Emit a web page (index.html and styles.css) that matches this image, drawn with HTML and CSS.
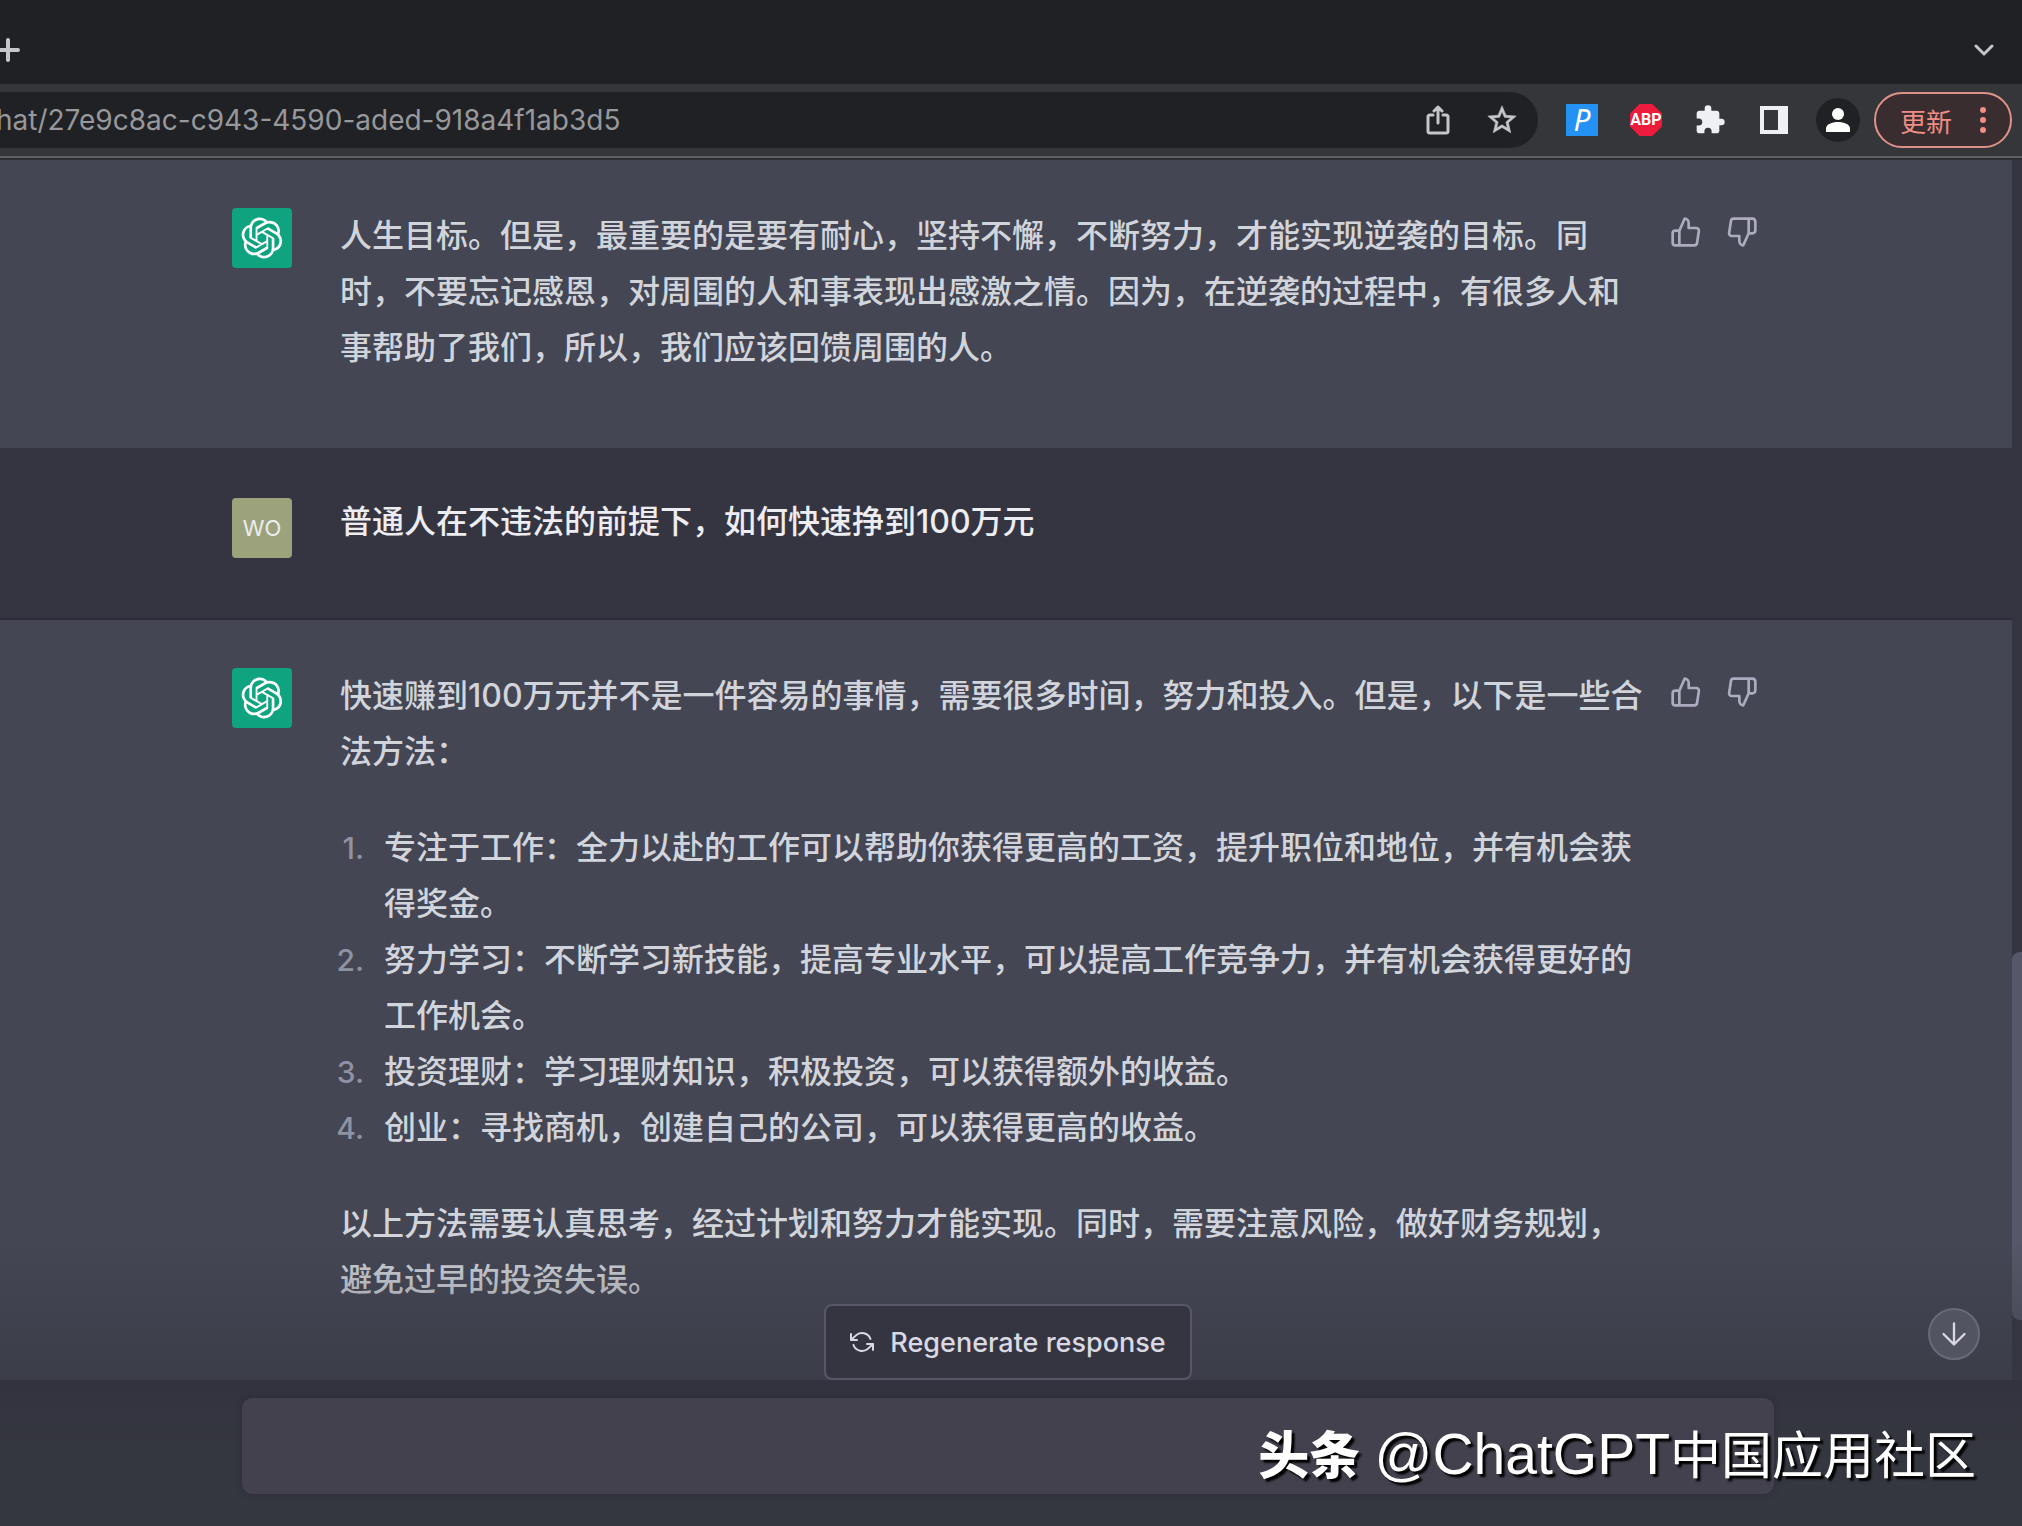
FILE: index.html
```html
<!DOCTYPE html>
<html lang="zh-CN">
<head>
    <meta charset="UTF-8">
    <meta name="viewport" content="width=device-width, initial-scale=1.0">
    <title>ChatGPT</title>
    <link rel="stylesheet" href="styles.css">
</head>
<body>
    <svg class="sprite" aria-hidden="true">
        <symbol id="logo" viewBox="0 0 41 41">
            <path fill="currentColor" d="M37.5324 16.8707C37.9808 15.5241 38.1363 14.0974 37.9886 12.6859C37.8409 11.2744 37.3934 9.91076 36.676 8.68622C35.6126 6.83404 33.9882 5.3676 32.0373 4.4985C30.0864 3.62941 27.9098 3.40259 25.8215 3.85078C24.8796 2.7893 23.7219 1.94125 22.4257 1.36341C21.1295 0.785575 19.7249 0.491269 18.3058 0.500197C16.1708 0.495044 14.0893 1.16803 12.3614 2.42214C10.6335 3.67624 9.34853 5.44666 8.6917 7.47815C7.30085 7.76286 5.98686 8.3414 4.8377 9.17505C3.68854 10.0087 2.73073 11.0782 2.02839 12.312C0.956464 14.1591 0.498905 16.2988 0.721698 18.4228C0.944492 20.5467 1.83612 22.5449 3.268 24.1293C2.81966 25.4759 2.66413 26.9026 2.81182 28.3141C2.95951 29.7256 3.40701 31.0892 4.12437 32.3138C5.18791 34.1659 6.8123 35.6322 8.76321 36.5013C10.7141 37.3704 12.8907 37.5973 14.9789 37.1492C15.9208 38.2107 17.0786 39.0587 18.3747 39.6366C19.6709 40.2144 21.0755 40.5087 22.4946 40.4998C24.6307 40.5054 26.7133 39.8321 28.4418 38.5772C30.1704 37.3223 31.4556 35.5506 32.1119 33.5179C33.5027 33.2332 34.8167 32.6547 35.9659 31.821C37.115 30.9874 38.0728 29.9178 38.7752 28.684C39.8458 26.8371 40.3023 24.6979 40.0789 22.5748C39.8556 20.4517 38.9639 18.4544 37.5324 16.8707ZM22.4978 37.8849C20.7443 37.8874 19.0459 37.2733 17.6994 36.1501C17.7601 36.117 17.8666 36.0586 17.936 36.0161L25.9004 31.4156C26.1003 31.3019 26.2663 31.137 26.3813 30.9378C26.4964 30.7386 26.5563 30.5124 26.5549 30.2825V19.0542L29.9213 20.998C29.9389 21.0068 29.9541 21.0198 29.9656 21.0359C29.977 21.052 29.9842 21.0707 29.9867 21.0902V30.3889C29.9842 32.375 29.1946 34.2791 27.7909 35.6841C26.3872 37.0892 24.4838 37.8806 22.4978 37.8849ZM6.39227 31.0064C5.51397 29.4888 5.19742 27.7107 5.49804 25.9832C5.55718 26.0187 5.66048 26.0818 5.73461 26.1244L13.699 30.7248C13.8975 30.8408 14.1233 30.902 14.3532 30.902C14.583 30.902 14.8088 30.8408 15.0073 30.7248L24.731 25.1103V28.9979C24.7321 29.0177 24.7283 29.0376 24.7199 29.0556C24.7115 29.0736 24.6988 29.0893 24.6829 29.1012L16.6317 33.7497C14.9096 34.7416 12.8643 35.0097 10.9447 34.4954C9.02506 33.9811 7.38785 32.7263 6.39227 31.0064ZM4.29707 13.6194C5.17156 12.0998 6.55279 10.9364 8.19885 10.3327C8.19885 10.4013 8.19491 10.5228 8.19491 10.6071V19.808C8.19351 20.0378 8.25334 20.2638 8.36823 20.4629C8.48312 20.6619 8.64893 20.8267 8.84863 20.9404L18.5723 26.5542L15.206 28.4979C15.1894 28.5089 15.1703 28.5155 15.1505 28.5173C15.1307 28.5191 15.1107 28.516 15.0924 28.5082L7.04046 23.8557C5.32135 22.8601 4.06716 21.2235 3.55289 19.3046C3.03862 17.3858 3.30624 15.3413 4.29707 13.6194ZM31.955 20.0556L22.2312 14.4411L25.5976 12.4981C25.6142 12.4872 25.6333 12.4805 25.6531 12.4787C25.6729 12.4769 25.6928 12.4801 25.7111 12.4879L33.7631 17.1364C34.9967 17.849 36.0017 18.8982 36.6606 20.1613C37.3194 21.4244 37.6047 22.849 37.4832 24.2684C37.3617 25.6878 36.8382 27.0432 35.9743 28.1759C35.1103 29.3086 33.9415 30.1717 32.6047 30.6641C32.6047 30.5947 32.6047 30.4733 32.6047 30.3889V21.188C32.6066 20.9586 32.5474 20.7328 32.4332 20.5338C32.319 20.3348 32.154 20.1698 31.955 20.0556ZM35.3055 15.0128C35.2464 14.9765 35.1431 14.9142 35.069 14.8717L27.1045 10.2712C26.906 10.1554 26.6803 10.0943 26.4504 10.0943C26.2206 10.0943 25.9948 10.1554 25.7963 10.2712L16.0726 15.8858V11.9982C16.0715 11.9783 16.0753 11.9585 16.0837 11.9405C16.0921 11.9225 16.1048 11.9068 16.1207 11.8949L24.1719 7.25025C25.4053 6.53903 26.8158 6.19376 28.2383 6.25482C29.6608 6.31589 31.0364 6.78077 32.2044 7.59508C33.3723 8.40939 34.2842 9.53945 34.8334 10.8531C35.3826 12.1667 35.5464 13.6095 35.3055 15.0128ZM14.2424 21.9419L10.8752 19.9981C10.8576 19.9893 10.8423 19.9763 10.8309 19.9602C10.8195 19.9441 10.8122 19.9254 10.8098 19.9058V10.6071C10.8107 9.18295 11.2173 7.78848 11.9819 6.58696C12.7466 5.38544 13.8377 4.42659 15.1275 3.82264C16.4173 3.21869 17.8524 2.99464 19.2649 3.1767C20.6775 3.35876 22.0089 3.93941 23.1034 4.85067C23.0427 4.88379 22.937 4.94215 22.8668 4.98473L14.9024 9.58517C14.7025 9.69878 14.5366 9.86356 14.4215 10.0626C14.3065 10.2616 14.2466 10.4877 14.2479 10.7175L14.2424 21.9419ZM16.071 17.9991L20.4018 15.4978L24.7325 17.9975V22.9985L20.4018 25.4983L16.071 22.9985V17.9991Z"/>
        </symbol>
        <symbol id="thumb-up" viewBox="0 0 24 24">
            <path d="M14 9V5a3 3 0 0 0-3-3l-4 9v11h11.28a2 2 0 0 0 2-1.7l1.38-9a2 2 0 0 0-2-2.3zM7 22H4a2 2 0 0 1-2-2v-7a2 2 0 0 1 2-2h3"/>
        </symbol>
        <symbol id="thumb-down" viewBox="0 0 24 24">
            <path d="M10 15v4a3 3 0 0 0 3 3l4-9V2H5.72a2 2 0 0 0-2 1.7l-1.38 9a2 2 0 0 0 2 2.3zm7-13h2.67A2.31 2.31 0 0 1 22 4v7a2.31 2.31 0 0 1-2.33 2H17"/>
        </symbol>
    </svg>

    <header class="browser">
        <div class="tabs">
            <button class="new-tab" type="button" aria-label="New tab">
                <svg width="24" height="24" viewBox="0 0 24 24"><path d="M12 2v20M2 12h20"/></svg>
            </button>
            <button class="tab-search" type="button" aria-label="Search tabs">
                <svg width="20" height="12" viewBox="0 0 20 12"><path d="M2 2l8 8 8-8"/></svg>
            </button>
        </div>
        <div class="toolbar">
            <div class="address">
                <input class="url" type="text" aria-label="Address" value="hat/27e9c8ac-c943-4590-aded-918a4f1ab3d5">
                <button class="tool" type="button" aria-label="Share">
                    <svg class="line" width="24" height="30" viewBox="0 0 24 30"><path d="M7 10H4a2 2 0 0 0-2 2v14a2 2 0 0 0 2 2h16a2 2 0 0 0 2-2V12a2 2 0 0 0-2-2h-3M12 18V2M8 6l4-4 4 4"/></svg>
                </button>
                <button class="tool" type="button" aria-label="Bookmark">
                    <svg width="34" height="34" viewBox="0 0 24 24"><path fill="#c4c6ca" stroke="#c4c6ca" stroke-width=".4" d="M22 9.24l-7.19-.62L12 2 9.19 8.63 2 9.24l5.46 4.73L5.82 21 12 17.27 18.18 21l-1.63-7.03L22 9.24zM12 15.4l-3.76 2.27 1-4.28-3.32-2.88 4.38-.38L12 6.1l1.71 4.04 4.38.38-3.32 2.88 1 4.28L12 15.4z"/></svg>
                </button>
            </div>
            <div class="extensions">
                <button class="tool" type="button"><span class="ext-p">P</span></button>
                <button class="tool" type="button"><span class="ext-abp">ABP</span></button>
                <button class="tool" type="button" aria-label="Extensions">
                    <svg width="32" height="32" viewBox="0 0 24 24"><path fill="#eef0f4" d="M20.5 11H19V7c0-1.100-.9-2-2-2h-4V3.500a2.500 2.500 0 0 0-5 0V5H4c-1.100 0-2 .9-2 2v3.800h1.500a2.700 2.700 0 0 1 0 5.400H2V20c0 1.100.9 2 2 2h3.800v-1.500a2.700 2.700 0 0 1 5.400 0V22H17c1.100 0 2-.9 2-2v-4h1.500a2.500 2.500 0 0 0 0-5z"/></svg>
                </button>
                <button class="tool" type="button" aria-label="Side panel">
                    <svg width="28" height="28" viewBox="0 0 28 28"><path fill="#eef0f4" fill-rule="evenodd" d="M0 0h28v28H0zM4 4v20h14V4z"/></svg>
                </button>
                <button class="tool" type="button" aria-label="Profile">
                    <svg width="44" height="44" viewBox="0 0 44 44"><circle cx="22" cy="22" r="22" fill="#202124"/><circle cx="22" cy="16" r="6" fill="#fff"/><path fill="#fff" d="M10 34v-3c0-5 6-7 12-7s12 2 12 7v3z"/></svg>
                </button>
            </div>
            <button class="update" type="button">
                更新
                <svg width="6" height="28" viewBox="0 0 6 28"><circle cx="3" cy="4" r="3"/><circle cx="3" cy="14" r="3"/><circle cx="3" cy="24" r="3"/></svg>
            </button>
        </div>
    </header>

    <main class="chat">
        <div class="thread">
            <article class="row bot">
                <div class="inner">
                    <div class="avatar"><svg width="42" height="42"><use href="#logo"/></svg></div>
                    <div class="text">
                        <p>人生目标。但是，最重要的是要有耐心，坚持不懈，不断努力，才能实现逆袭的目标。同时，不要忘记感恩，对周围的人和事表现出感激之情。因为，在逆袭的过程中，有很多人和事帮助了我们，所以，我们应该回馈周围的人。</p>
                    </div>
                    <div class="votes">
                        <button type="button" aria-label="Good response"><svg width="32" height="32"><use href="#thumb-up"/></svg></button>
                        <button type="button" aria-label="Bad response"><svg width="32" height="32"><use href="#thumb-down"/></svg></button>
                    </div>
                </div>
            </article>

            <article class="row user">
                <div class="inner">
                    <div class="avatar">WO</div>
                    <div class="text">
                        <p>普通人在不违法的前提下，如何快速挣到100万元</p>
                    </div>
                </div>
            </article>

            <article class="row bot">
                <div class="inner">
                    <div class="avatar"><svg width="42" height="42"><use href="#logo"/></svg></div>
                    <div class="text">
                        <p>快速赚到100万元并不是一件容易的事情，需要很多时间，努力和投入。但是，以下是一些合法方法：</p>
                        <ol>
                            <li>专注于工作：全力以赴的工作可以帮助你获得更高的工资，提升职位和地位，并有机会获得奖金。</li>
                            <li>努力学习：不断学习新技能，提高专业水平，可以提高工作竞争力，并有机会获得更好的工作机会。</li>
                            <li>投资理财：学习理财知识，积极投资，可以获得额外的收益。</li>
                            <li>创业：寻找商机，创建自己的公司，可以获得更高的收益。</li>
                        </ol>
                        <p>以上方法需要认真思考，经过计划和努力才能实现。同时，需要注意风险，做好财务规划，避免过早的投资失误。</p>
                    </div>
                    <div class="votes">
                        <button type="button" aria-label="Good response"><svg width="32" height="32"><use href="#thumb-up"/></svg></button>
                        <button type="button" aria-label="Bad response"><svg width="32" height="32"><use href="#thumb-down"/></svg></button>
                    </div>
                </div>
            </article>
        </div>

        <div class="scroll-thumb"></div>

        <form class="composer">
            <button class="regenerate" type="button">
                <svg width="24" height="24" viewBox="0 0 24 24"><path d="M1 4v6h6M23 20v-6h-6M20.49 9A9 9 0 0 0 5.64 5.64L1 10m22 4l-4.64 4.36A9 9 0 0 1 3.51 15"/></svg>
                Regenerate response
            </button>
            <textarea class="prompt" aria-label="Message" rows="1"></textarea>
        </form>

        <button class="to-bottom" type="button" aria-label="Scroll to bottom">
            <svg width="28" height="28" viewBox="0 0 24 24"><path d="M12 3v18M3 12l9 9 9-9"/></svg>
        </button>

        <div class="watermark"><b>头条</b> <span>@ChatGPT</span>中国应用社区</div>
    </main>
</body>
</html>
```
FILE: styles.css
```css
* {
    box-sizing: border-box;
}

body {
    margin: 0;
    height: 100vh;
    display: flex;
    flex-direction: column;
    overflow: hidden;
    background: #343541;
    color: #d1d5db;
    font-family: Inter, "Noto Sans CJK SC", sans-serif;
}

button {
    display: flex;
    align-items: center;
    justify-content: center;
    padding: 0;
    border: 0;
    background: none;
    color: inherit;
    font: inherit;
    cursor: pointer;
}

p,
ol {
    margin: 0;
}

svg {
    display: block;
    flex: none;
}

.sprite {
    position: absolute;
    width: 0;
    height: 0;
}

/* browser chrome */
.browser {
    flex: none;
    background: #35363a;
    border-bottom: 2px solid #2c2d31;
}

.tabs {
    height: 84px;
    display: flex;
    align-items: center;
    justify-content: space-between;
    padding: 16px 28px 0 0;
    background: #202124;
}

.new-tab {
    margin-left: -4px;
}

.tabs svg,
.line {
    fill: none;
    stroke: #c4c6ca;
    stroke-width: 3;
    stroke-linecap: round;
    stroke-linejoin: round;
}

.new-tab svg {
    stroke-width: 4;
}

.toolbar {
    display: flex;
    align-items: center;
    padding: 8px 10px 8px 0;
    border-bottom: 2px solid #5f6064;
}

.address {
    flex: 1;
    height: 56px;
    display: flex;
    align-items: center;
    padding-right: 4px;
    background: #202124;
    border-radius: 0 28px 28px 0;
}

.url {
    flex: 1;
    min-width: 0;
    margin-left: -4px;
    padding: 0;
    border: 0;
    outline: 0;
    background: none;
    color: #96989c;
    font: 28px Inter, sans-serif;
}

.tool {
    width: 64px;
    height: 56px;
}

.extensions {
    display: flex;
    padding: 0 4px 0 12px;
}

.ext-p {
    width: 32px;
    height: 32px;
    background: #2492f5;
    color: #fff;
    font: italic 30px/32px "Noto Sans", sans-serif;
}

.ext-abp {
    width: 32px;
    height: 32px;
    background: #ee1c3c;
    color: #fff;
    font: bold 16px/32px Roboto, sans-serif;
    clip-path: polygon(30% 0, 70% 0, 100% 30%, 100% 70%, 70% 100%, 30% 100%, 0 70%, 0 30%);
}

.update {
    height: 56px;
    gap: 28px;
    padding: 0 24px;
    border: 2px solid #e0918c;
    border-radius: 28px;
    background: #392d2f;
    color: #ee8e85;
    font-size: 26px;
}

.update svg {
    fill: currentColor;
}

/* conversation */
.chat {
    flex: 1;
    min-height: 0;
    position: relative;
    overflow: hidden;
}

.thread {
    margin-right: 10px;
}

.row {
    padding: 48px 0 72px;
    border-bottom: 2px solid #2d2d39;
}

.row.bot {
    background: #444654;
}

.row.user {
    padding-bottom: 60px;
    color: #ececf1;
}

.row:first-child {
    border-bottom-color: #343541;
}

.row:last-child {
    border-bottom: 0;
}

.inner {
    display: flex;
    gap: 48px;
    max-width: 1548px;
    margin: 0 auto;
}

.avatar {
    flex: none;
    width: 60px;
    height: 60px;
    display: flex;
    align-items: center;
    justify-content: center;
    border-radius: 4px;
    background: #10a37f;
    color: #fff;
    font-size: 22px;
}

.user .avatar {
    background: #9ca37c;
    color: #ececf1;
}

.text {
    flex: 1;
    font-size: 32px;
    font-weight: 500;
    line-height: 56px;
}

.user .text {
    line-height: 48px;
}

ol {
    margin: 40px 0;
    padding-left: 44px;
    list-style: none;
    counter-reset: item;
}

li {
    position: relative;
    counter-increment: item;
}

li::before {
    content: counter(item) ".";
    position: absolute;
    right: 100%;
    margin-right: 20px;
    color: #8e92a2;
    font-size: 30px;
}

.votes {
    display: flex;
    align-items: flex-start;
    gap: 24px;
    margin-left: -22px;
    padding: 8px 22px 0 0;
}

.votes svg,
.regenerate svg,
.to-bottom svg {
    fill: none;
    stroke: #acacbe;
    stroke-width: 2;
    stroke-linecap: round;
    stroke-linejoin: round;
}

.scroll-thumb {
    position: absolute;
    top: 58%;
    right: 0;
    bottom: 206px;
    width: 10px;
    background: #565869;
    border-radius: 8px 0 0 8px;
}

/* input area lies over the end of the thread */
.composer {
    position: absolute;
    right: 0;
    bottom: 0;
    left: 0;
    display: flex;
    flex-direction: column;
    align-items: center;
    gap: 18px;
    padding: 64px 6px 32px 0;
    background: linear-gradient(rgba(53, 55, 64, 0), rgba(53, 55, 64, .6) 140px, #32333e 140px, #353740 220px);
}

.regenerate {
    height: 76px;
    gap: 16px;
    padding: 0 24px;
    border: 2px solid #565869;
    border-radius: 8px;
    background: #343541;
    color: #d9d9e3;
    font-size: 27px;
    font-weight: 500;
}

.regenerate svg {
    stroke: #d9d9e3;
}

.prompt {
    width: 100%;
    max-width: 1532px;
    height: 96px;
    padding: 24px 32px;
    border: 0;
    border-radius: 10px;
    outline: 0;
    resize: none;
    background: #42414d;
    box-shadow: 0 0 6px rgba(32, 33, 40, .4);
    color: #fff;
    font: 32px/48px Inter, sans-serif;
}

.to-bottom {
    position: absolute;
    right: 42px;
    bottom: 166px;
    width: 52px;
    height: 52px;
    border: 2px solid #696a78;
    border-radius: 50%;
    background: #535461;
}

.to-bottom svg {
    stroke: #d9d9e3;
}

.watermark {
    position: absolute;
    right: 46px;
    bottom: 34px;
    color: #fff;
    font-size: 51px;
    line-height: 72px;
    white-space: nowrap;
    text-shadow: 3px 3px 2px #000;
}

.watermark b {
    font-weight: 900;
}

.watermark span {
    font-family: "Liberation Sans", sans-serif;
    font-size: 57px;
}
```
